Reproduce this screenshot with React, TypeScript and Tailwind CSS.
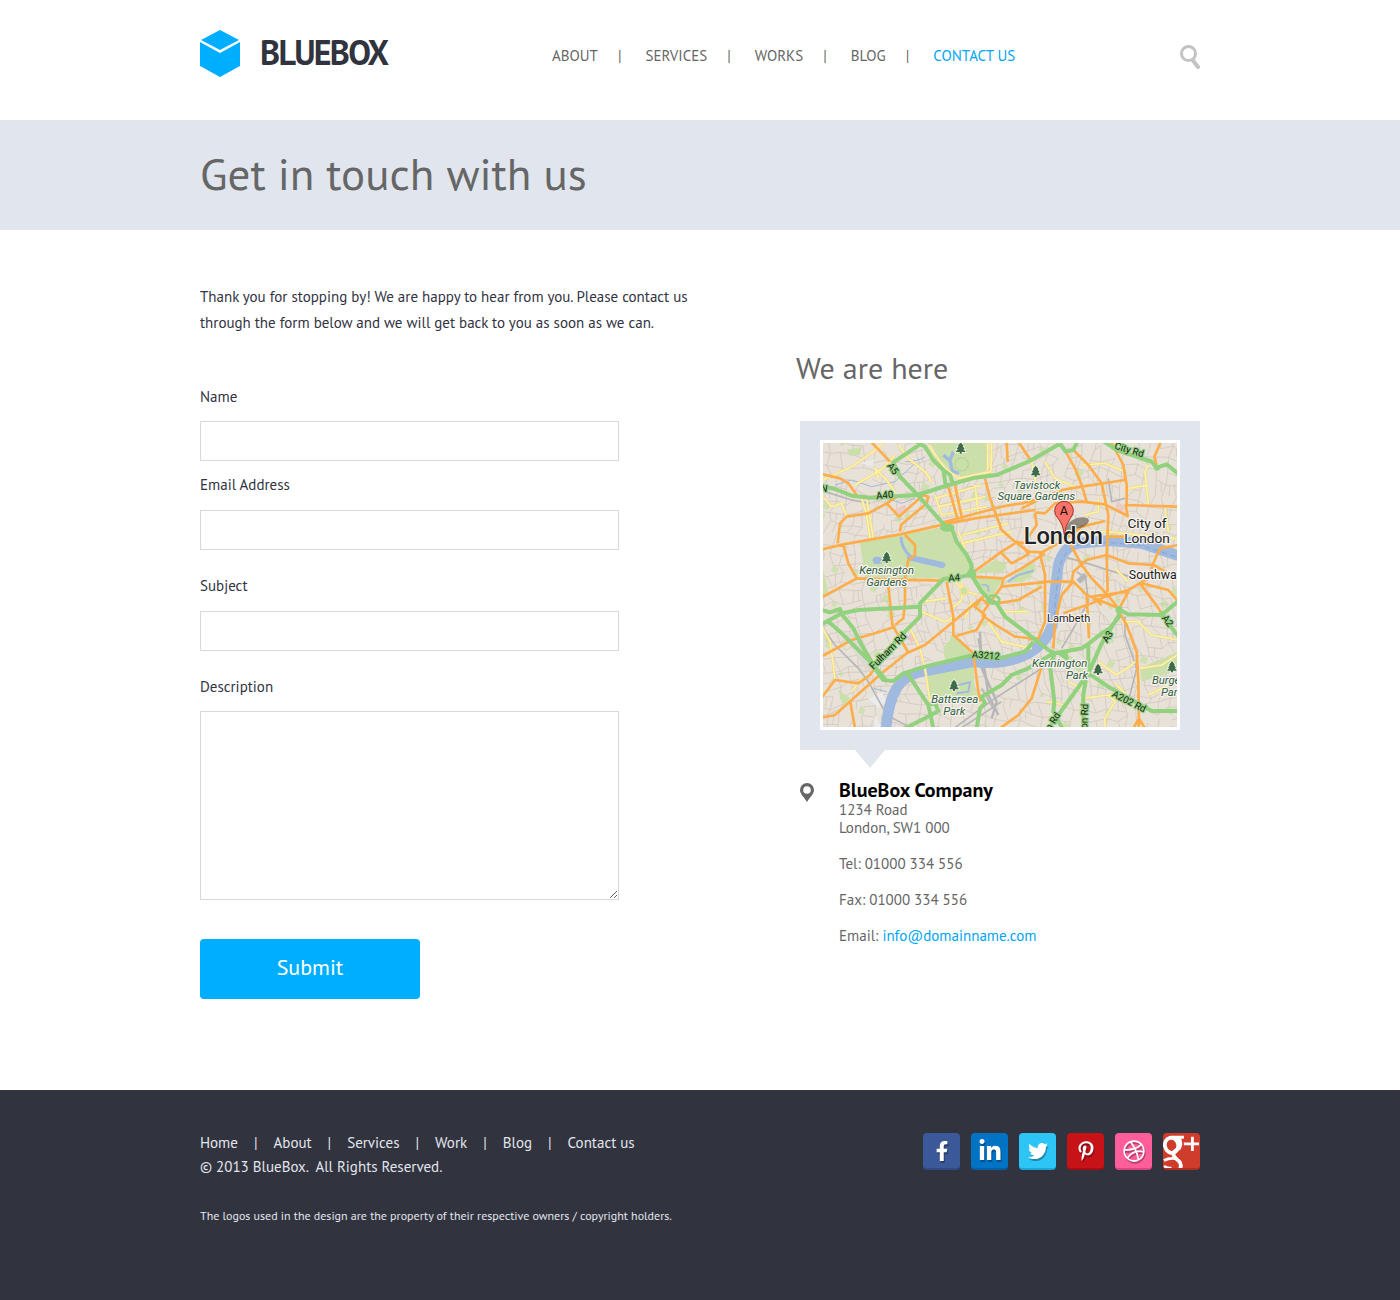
import { Fragment } from "react";
import type { ReactNode } from "react";
import { FaFacebookF, FaLinkedinIn, FaTwitter, FaPinterestP, FaDribbble } from "react-icons/fa";

const navItems = ["ABOUT", "SERVICES", "WORKS", "BLOG", "CONTACT US"];
const footerItems = ["Home", "About", "Services", "Work", "Blog", "Contact us"];

/* ---------- map data (three units per map pixel) ---------- */

const greenRoads = [
  "M315 28L235 82L255 125L308 180L395 278L412 285L425 320L455 360L470 390L468 418L500 470L525 495L545 505L570 545L630 590L700 645L720 655L800 640L822 625L860 595L885 580L912 545L912 524L940 538L1040 540L1090 498",
  "M20 153L60 162L110 182L165 188L308 180L400 150L480 128L545 120L640 80L735 26",
  "M300 18L330 35L355 75L385 105L405 120L415 150M385 105L392 150",
  "M468 418L440 425L385 432L315 505L315 545L240 620L185 690",
  "M20 568L80 535L130 525L310 515",
  "M20 525L45 532L75 522L82 540L115 580L140 630L175 690L215 738",
  "M35 555L75 590L165 680L205 735L235 738L265 715L330 695L475 660L560 668L630 650L655 620",
  "M275 712L340 810L355 880M340 810L360 805L370 828L330 850L270 880",
  "M485 880L495 820L510 805L500 785L560 750L590 720L640 700L715 655",
  "M1040 540L1090 604M912 540L860 625L820 715L730 840L700 880",
  "M720 655L705 690L718 800L715 830L742 880",
  "M820 625L820 700M815 720L805 780L805 880",
  "M820 715L880 755L960 800L1010 828L1090 828",
  "M868 20L905 45L1010 80L1025 98L1055 88L1090 117",
  "M735 26L752 50L775 45L787 20M735 655L755 670L750 645",
];

const orangeRoads = [
  "M168 20L225 80M20 117L75 130L100 145L125 180",
  "M20 343L85 328L255 298L400 265L480 250L660 225",
  "M68 325L75 265L95 245L160 235L215 205L245 185",
  "M215 205L252 245L325 180L340 185L335 205L258 270L255 290",
  "M400 155L430 260M420 150L442 255",
  "M510 130L525 190L560 285L600 320L630 325",
  "M385 262L560 215L620 205L680 190",
  "M85 330L100 385L125 430L80 455L20 487M125 430L385 437",
  "M270 300L300 330L300 360L280 375L270 430L270 500L265 550L240 570",
  "M218 430L232 570L279 651M20 664L110 615L180 595L240 575",
  "M395 440L415 545L415 600L475 655L490 770L497 800",
  "M510 480L415 560L330 630L275 655L200 715L110 795L60 840L20 848M105 795L120 880",
  "M20 788L60 735L130 745L165 720L185 690",
  "M425 602L485 585L510 540L480 515L500 490L520 510L505 530",
  "M500 540L550 575L600 605L670 612",
  "M470 415L560 350L600 325M470 425L565 430L620 400L690 355",
  "M530 495L560 455L700 440L770 440M545 505L610 495L680 455M560 455L565 430",
  "M575 20L578 80M610 20L650 80",
  "M555 350L590 385L640 358L625 335",
  "M600 320L640 350L680 352L740 320L800 275L870 258",
  "M660 235L665 270L630 320M660 232L690 235L720 205L800 200L870 208L938 243L932 210L1090 215",
  "M620 220L680 190L740 165L800 155L930 135L930 110",
  "M740 28L780 100L800 150L815 200",
  "M775 45L820 90L860 145L880 240L875 360L878 470",
  "M890 24L925 90L935 150L935 210M1038 20L1018 65L1025 95",
  "M675 355L690 420L690 560L670 610L640 613",
  "M765 325L800 390L830 430L878 480",
  "M770 440L775 410L815 375L875 360L940 385L1015 390L1090 432",
  "M740 480L775 440L815 480L912 520M880 305L930 305M715 640L720 560L740 480",
  "M745 535L830 505L870 485L940 465L1000 430L1015 385L1035 340L1090 330",
  "M815 480L822 610M870 470L912 522L940 470L878 478L830 485L860 510",
  "M975 445L1020 505L1040 535M980 445L1060 465L1090 500",
  "M912 530L935 570L965 650L970 740L972 880",
  "M680 695L650 790L610 840L555 880M955 880L972 850L990 880",
];

const yellowRoads = [
  "M20 137L110 95L175 50L207 20M120 150L205 100L240 60",
  "M190 130L180 100L210 130L240 170M250 30L280 70L330 110L350 140",
  "M20 182L50 215L80 205L95 245M140 190L155 240L165 310M155 190L175 310",
  "M530 20L528 110L430 130L390 100L340 30M518 20L518 105",
  "M360 190L500 150M370 215L510 185M380 240L515 215M440 300L580 265M440 325L590 290",
  "M430 290L450 340M480 150L490 240M360 180L380 240",
  "M320 530L390 560L415 545M280 570L315 640L330 700L345 800",
  "M320 500L395 490M410 520L440 495L440 440M420 440L447 468L490 480M470 500L450 550",
  "M520 560L560 620L650 640M560 530L640 530",
  "M800 90L870 85L930 110M690 80L720 130L790 160M650 80L670 180M810 240L850 230L850 190",
  "M800 290L880 290L1090 312M1000 90L990 110L1000 210M1050 220L1060 290M900 400L940 440",
  "M770 540L820 570M920 560L970 560L1010 600L1090 615M850 680L905 720L950 690L960 680",
  "M975 700L1040 690L1090 658M760 740L800 760M800 790L880 780L930 775L900 745",
  "M880 780L900 800L870 850L870 880M695 800L750 810M1000 780L1060 750",
  "M20 575L45 620L55 690L60 735M140 730L110 770M940 160L1000 150M720 150L740 190",
];

const parks = [
  "M135 325L255 300L395 275L425 320L470 390L460 420L400 430L150 425Z",
  "M345 20H518V105L440 125L400 100L370 70Z",
  "M335 715L475 690L480 780L400 795L345 790Z",
  "M385 640L415 600L470 655L390 675Z",
  "M480 415L540 375L575 385L565 412Z",
  "M478 428L565 432L530 485L505 470Z",
  "M568 445L650 380L665 405L625 440Z",
  "M975 700L1090 650V705L980 740Z",
  "M760 660L815 690L808 720L760 690Z",
  "M24 400L40 470L24 480Z",
  "M95 45L140 35L135 60L105 62Z",
  "M70 765L105 790L85 815Z",
];

const pseudoRandom = (n: number) => {
  const v = Math.sin(n * 127.1 + 11.7) * 43758.5453;
  return v - Math.floor(v);
};

/* side streets: a jittered grid whose direction drifts across the map */
const streetPoint = (i: number, j: number) => {
  const x = i * 33 - 20;
  const y = j * 31 - 20;
  return [
    Math.round(x + Math.cos(y / 130) * 34 + (pseudoRandom(i * 53 + j) - 0.5) * 20),
    Math.round(y + Math.sin(x / 170 + y / 260) * 40 + (pseudoRandom(i + j * 71) - 0.5) * 20),
  ];
};

const streets: string[] = [];
const greens: { x: number; y: number; s: number }[] = [];
for (let i = 0; i < 36; i++) {
  for (let j = 0; j < 32; j++) {
    const [ax, ay] = streetPoint(i, j);
    const [bx, by] = streetPoint(i + 1, j);
    const [cx, cy] = streetPoint(i, j + 1);
    const r = pseudoRandom(i * 91 + j * 17);
    if (r > 0.25) streets.push(`M${ax} ${ay}L${bx} ${by}`);
    if (r < 0.75) streets.push(`M${ax} ${ay}L${cx} ${cy}`);
    if (r > 0.35 && r < 0.5) {
      streets.push(`M${(ax + bx) / 2} ${(ay + by) / 2}L${(ax + cx) / 2 + 16} ${(ay + cy) / 2 + 14}`);
    }
    if (r > 0.92) greens.push({ x: ax, y: ay, s: Math.round(10 + pseudoRandom(i + j) * 12) });
  }
}
const streetPath = streets.join("");

function Roads({ paths, color, width }: { paths: string[]; color: string; width: number }) {
  return <path d={paths.join("")} fill="none" stroke={color} strokeWidth={width} strokeLinejoin="round" />;
}

function Tree({ x, y }: { x: number; y: number }) {
  return (
    <path
      transform={`translate(${x} ${y})`}
      d="M0 -16L9 -5H6L12 4H8L15 13H3V18H-3V13H-15L-8 4H-12L-6 -5H-9Z"
      fill="#3f6b4b"
      stroke="#f4f5e8"
      strokeWidth="4"
      paintOrder="stroke"
    />
  );
}

type LabelProps = {
  x: number;
  y: number;
  size?: number;
  rotate?: number;
  fill?: string;
  halo?: string;
  italic?: boolean;
  weight?: number;
  children: ReactNode;
};

function MapLabel({ x, y, size = 33, rotate = 0, fill = "#222222", halo = "#f7f4ef", italic, weight = 400, children }: LabelProps) {
  return (
    <text
      x={x}
      y={y}
      fontSize={size}
      fontWeight={weight}
      fontStyle={italic ? "italic" : "normal"}
      fill={fill}
      stroke={halo}
      strokeWidth="7"
      strokeLinejoin="round"
      paintOrder="stroke"
      textAnchor="middle"
      transform={`rotate(${rotate} ${x} ${y})`}
    >
      {children}
    </text>
  );
}

function LondonMap() {
  const road = "#92d17e";
  const park = "#2f5e3f";
  return (
    <svg
      viewBox="24 24 1062 852"
      role="img"
      aria-label="Map of London"
      className="block w-full font-['Roboto',sans-serif]"
    >
      <rect x="24" y="24" width="1062" height="852" fill="#e8e1d7" />
      <g fill="#cfe0b2">
        {greens.map((g, i) => (
          <rect key={i} x={g.x} y={g.y} width={g.s} height={g.s} transform={`rotate(25 ${g.x} ${g.y})`} />
        ))}
      </g>
      <path d={streetPath} fill="none" stroke="#cdc2ba" strokeWidth="2" />
      <path d="M235 225l35-16 8 14-30 16zM905 200l24 12-6 22-20-8zM285 595l22 14-14 14-16-10z" fill="#ecc9c4" />
      <path d="M160 790l40-20 16 30-26 20zM180 840l20 36h-24zM135 85l45-12-10 20z" fill="#ebebeb" />
      <path d="M85 598L120 595L170 665L185 715L150 700Z" fill="#dcd8d4" />
      <g fill="#cadfaa">
        {parks.map((d) => (
          <path key={d} d={d} />
        ))}
      </g>
      <circle cx="440" cy="88" r="20" fill="none" stroke="#b4d090" strokeWidth="3" />
      <g fill="none" stroke="#b6b6b9" strokeWidth="5">
        <path d="M24 580L60 630L130 700L160 740L215 840L300 885" />
        <path d="M495 590L500 700L545 800L530 850M490 610L512 720L520 780L550 840" strokeWidth="7" />
        <path d="M410 885L540 790L680 700M430 885L560 800M500 760L540 830" />
        <path d="M740 640L770 590L820 500L812 430L785 410M930 545L930 600L965 700L940 800" />
        <path d="M880 130L890 200L930 190M745 365L800 380L880 405L960 430M30 170L110 195L165 205" />
        <path d="M790 440L812 420" strokeWidth="16" />
      </g>
      <g fill="none" stroke="#a0badf">
        <path
          d="M212 890Q220 800 245 760Q265 725 310 712L475 680Q560 690 620 665Q690 635 712 570L720 470L730 390Q745 335 790 325L880 317L980 325L1090 362"
          strokeWidth="32"
        />
        <path d="M258 305Q258 340 290 368" strokeWidth="9" />
        <path d="M285 368Q330 378 382 390" strokeWidth="18" strokeLinecap="round" />
        <path d="M184 376L190 376" strokeWidth="22" strokeLinecap="round" />
        <path d="M385 60L405 78L412 108L432 115M403 80L415 50" strokeWidth="10" />
        <path d="M578 440L610 420L655 407M430 750L465 742L460 770L425 775" strokeWidth="6" />
        <path d="M500 450Q525 445 520 470" strokeWidth="5" />
        <path d="M60 150L110 135L170 155L240 140L300 85M270 80Q310 80 330 65M215 190L260 205L300 190M175 760L215 770" strokeWidth="3" />
      </g>
      <path
        d="M716 570L724 470L734 395Q750 342 790 330L880 322L980 332L1090 368"
        fill="none"
        stroke="#86a3d6"
        strokeWidth="3"
        strokeDasharray="16 10"
      />
      <Roads paths={yellowRoads} color="#e6d592" width={8} />
      <Roads paths={yellowRoads} color="#fff3a0" width={5} />
      <Roads paths={orangeRoads} color="#fdae4b" width={8} />
      <Roads paths={greenRoads} color={road} width={12} />
      <circle cx="447" cy="468" r="12" fill="#cadfaa" stroke="#f2e48c" strokeWidth="5" />
      <ellipse cx="535" cy="494" rx="18" ry="12" fill="none" stroke={road} strokeWidth="8" />
      <g fill={road}>
        <ellipse cx="397" cy="278" rx="22" ry="12" />
        <circle cx="470" cy="416" r="14" />
        <circle cx="912" cy="524" r="11" />
        <circle cx="1026" cy="98" r="9" />
        <circle cx="1042" cy="538" r="10" />
      </g>

      <Tree x={437} y={38} />
      <Tree x={662} y={108} />
      <Tree x={215} y={366} />
      <Tree x={417} y={750} />
      <Tree x={849} y={702} />
      <Tree x={1071} y={694} />

      <g>
        <MapLabel x={226} y={107} size={29} rotate={52} halo={road}>A5</MapLabel>
        <MapLabel x={210} y={190} size={29} rotate={-6} halo={road}>A40</MapLabel>
        <MapLabel x={26} y={170} size={29} rotate={8} halo={road}>N</MapLabel>
        <MapLabel x={418} y={438} size={29} rotate={-4} halo={road}>A4</MapLabel>
        <MapLabel x={226} y={655} size={30} rotate={-45} halo={road}>Fulham Rd</MapLabel>
        <MapLabel x={512} y={671} size={29} rotate={4} halo={road}>A3212</MapLabel>
        <MapLabel x={886} y={610} size={29} rotate={-58} halo={road}>A3</MapLabel>
        <MapLabel x={1050} y={564} size={29} rotate={52} halo={road}>A2</MapLabel>
        <MapLabel x={938} y={808} size={29} rotate={27} halo={road}>A202 Rd</MapLabel>
        <MapLabel x={940} y={54} size={29} rotate={17} halo={road}>City Rd</MapLabel>
        <MapLabel x={818} y={844} size={29} rotate={-88} halo={road}>on Rd</MapLabel>
        <MapLabel x={722} y={864} size={29} rotate={-58} halo={road}>n Rd</MapLabel>
      </g>
      <g>
        <MapLabel x={666} y={161} size={34} italic fill={park}>Tavistock</MapLabel>
        <MapLabel x={664} y={196} size={34} italic fill={park}>Square Gardens</MapLabel>
        <MapLabel x={215} y={416} size={34} italic fill={park}>Kensington</MapLabel>
        <MapLabel x={215} y={454} size={34} italic fill={park}>Gardens</MapLabel>
        <MapLabel x={419} y={803} size={34} italic fill={park}>Battersea</MapLabel>
        <MapLabel x={418} y={839} size={34} italic fill={park}>Park</MapLabel>
        <MapLabel x={734} y={695} size={34} italic fill={park}>Kennington</MapLabel>
        <MapLabel x={786} y={731} size={34} italic fill={park}>Park</MapLabel>
        <MapLabel x={1062} y={747} size={34} italic fill={park}>Burges</MapLabel>
        <MapLabel x={1071} y={782} size={34} italic fill={park}>Park</MapLabel>
        <MapLabel x={761} y={560}>Lambeth</MapLabel>
        <MapLabel x={1029} y={432} size={37}>Southwark</MapLabel>
        <MapLabel x={996} y={278} size={41}>City of</MapLabel>
        <MapLabel x={996} y={323} size={41}>London</MapLabel>
      </g>

      <path d="M750 292Q752 262 785 249Q820 242 822 258Q814 280 775 282Z" fill="#3b352c" opacity="0.5" />
      <MapLabel x={745} y={326} size={71} weight={500}>London</MapLabel>
      <path
        d="M748 300Q745 270 729 250Q719 240 719 227A28 28 0 0 1 775 227Q775 240 766 250Q751 270 748 300Z"
        fill="#fb7268"
        stroke="#a0302a"
        strokeWidth="3"
      />
      <text x="747" y="240" fontSize="38" textAnchor="middle" fill="#111111">
        A
      </text>
    </svg>
  );
}

/* ---------- icons ---------- */

function Logo() {
  return (
    <svg viewBox="0 0 40 47" className="h-[47px] w-10" fill="#00aeff" aria-hidden="true">
      <path d="M20 0L39 10L20 20L1 10Z" />
      <path d="M0 12L20 23L40 12V36L20 47L0 36Z" />
    </svg>
  );
}

function SearchIcon() {
  return (
    <svg viewBox="0 0 20 24" className="h-6 w-5" fill="none" stroke="#c3c3c3" aria-hidden="true">
      <circle cx="8.500" cy="8.500" r="7" strokeWidth="3" />
      <path d="M13 15.500L18 22" strokeWidth="4" strokeLinecap="round" />
    </svg>
  );
}

function PinIcon() {
  return (
    <svg viewBox="0 0 14 19" className="h-[19px] w-3.5" aria-hidden="true">
      <path
        fillRule="evenodd"
        fill="#666666"
        d="M7 0A7 7 0 0 1 14 7C14 11 10 14 7 19C4 14 0 11 0 7A7 7 0 0 1 7 0ZM7 3.200A3.800 3.800 0 1 0 7 10.800A3.800 3.800 0 1 0 7 3.200Z"
      />
    </svg>
  );
}

function GooglePlusMark() {
  return (
    <svg viewBox="0 0 37 37" className="size-full" fill="none" stroke="#ffffff" aria-hidden="true">
      <ellipse cx="8" cy="13" rx="7" ry="8" strokeWidth="4" transform="rotate(-14 8 13)" />
      <path d="M8 4.500H21" strokeWidth="3" />
      <path d="M15 5Q19 10 16 16Q9 20 10 23Q11 26 16 30Q19 33 17 38" strokeWidth="4" />
      <path d="M0 29Q5 26 13 27" strokeWidth="3" />
      <path d="M0 35Q3 38 8 37" strokeWidth="3" />
      <path d="M21 11.500H37M30 4V19" strokeWidth="3" />
    </svg>
  );
}

const shadow = "drop-shadow-[1px_2px_0px_rgba(0,0,0,0.3)]";

const socials: { name: string; tile: string; icon: ReactNode }[] = [
  { name: "Facebook", tile: "bg-[#3b5999] border-[#2f4a86]", icon: <FaFacebookF className={`size-5 ${shadow}`} /> },
  { name: "LinkedIn", tile: "bg-[#0173c5] border-[#015fa8]", icon: <FaLinkedinIn className={`size-6 ${shadow}`} /> },
  { name: "Twitter", tile: "bg-[#2cc5f6] border-[#1ba6d8]", icon: <FaTwitter className={`size-5 ${shadow}`} /> },
  { name: "Pinterest", tile: "bg-[#c71218] border-[#a50d12]", icon: <FaPinterestP className={`size-5 ${shadow}`} /> },
  { name: "Dribbble", tile: "bg-[#ff5e9a] border-[#dd4580]", icon: <FaDribbble className={`size-[22px] ${shadow}`} /> },
  { name: "Google Plus", tile: "bg-[#d03c2c] border-[#ae2f22]", icon: <GooglePlusMark /> },
];

/* ---------- page ---------- */

const field = "block w-full max-w-[419px] border border-[#d9d9d9] bg-white px-3 outline-none focus:border-[#00aeff]";

export default function App() {
  return (
    <div className="bg-white font-['PT_Sans','Lato',sans-serif] text-[15px] text-[#31333f]">
      <header className="mx-auto flex h-[120px] max-w-[1000px] items-start justify-between">
        <a href="#home" className="mt-[30px] flex items-start gap-5">
          <Logo />
          <span className="text-[34px] leading-[44px] font-bold tracking-tighter">BLUEBOX</span>
        </a>
        <nav className="mt-11 flex items-center gap-5 leading-6 text-[#666666]" aria-label="Main">
          {navItems.map((item, i) => (
            <Fragment key={item}>
              {i > 0 && <span>|</span>}
              <a href="#page" className={i === 0 ? "" : i === 4 ? "ml-1 text-[#00a5f5]" : "ml-1"}>
                {item}
              </a>
            </Fragment>
          ))}
        </nav>
        <button type="button" aria-label="Search" className="mt-[45px]">
          <SearchIcon />
        </button>
      </header>

      <div className="bg-[#e1e6ee]">
        <div className="mx-auto flex h-[110px] max-w-[1000px] items-center pb-1">
          <h1 className="text-[45px] leading-[48px] text-[#666666]">Get in touch with us</h1>
        </div>
      </div>

      <main className="mx-auto flex max-w-[1000px] items-start justify-between pt-[54px] pb-[91px]">
        <section className="w-1/2">
          <p className="leading-[26px]">
            Thank you for stopping by! We are happy to hear from you. Please contact us through the form below and we
            will get back to you as soon as we can.
          </p>
          <form className="mt-[49px]" onSubmit={(e) => e.preventDefault()}>
            <label htmlFor="name" className="block leading-6">Name</label>
            <input id="name" type="text" className={`mt-3 h-10 ${field}`} />
            <label htmlFor="email" className="mt-3 block leading-6">Email Address</label>
            <input id="email" type="email" className={`mt-[13px] h-10 ${field}`} />
            <label htmlFor="subject" className="mt-6 block leading-6">Subject</label>
            <input id="subject" type="text" className={`mt-[13px] h-10 ${field}`} />
            <label htmlFor="description" className="mt-6 block leading-6">Description</label>
            <textarea id="description" className={`mt-3 h-[189px] py-2 ${field}`} />
            <button
              type="submit"
              className="mt-[39px] block h-[60px] w-[220px] rounded bg-[#00aeff] pb-1 text-[22px] text-white"
            >
              Submit
            </button>
          </form>
        </section>

        <section className="w-2/5 pt-[66px]">
          <h2 className="-ml-1 text-3xl leading-9 text-[#666666]">We are here</h2>
          <div className="mt-[35px] bg-[#e1e6ee] px-5 pt-[19px] pb-5">
            <div className="border-[3px] border-white">
              <LondonMap />
            </div>
          </div>
          <svg viewBox="0 0 30 18" className="ml-[55px] block h-[18px] w-[30px]" aria-hidden="true">
            <path d="M0 0H30L15 18Z" fill="#e1e6ee" />
          </svg>
          <div className="mt-[11px] flex items-start gap-[25px]">
            <div className="mt-1">
              <PinIcon />
            </div>
            <address className="leading-[18px] text-[#666666] not-italic">
              <h3 className="text-xl leading-[22px] font-bold text-black">BlueBox Company</h3>
              <p>1234 Road</p>
              <p>London, SW1 000</p>
              <p className="mt-[18px]">Tel: 01000 334 556</p>
              <p className="mt-[18px]">Fax: 01000 334 556</p>
              <p className="mt-[18px]">
                Email:{" "}
                <a href="mailto:info@domainname.com" className="text-[#00a5f5]">
                  info@domainname.com
                </a>
              </p>
            </address>
          </div>
        </section>
      </main>

      <footer className="bg-[#31333f] text-[#e3e6ec]">
        <div className="mx-auto flex min-h-[210px] max-w-[1000px] items-start justify-between">
          <div className="pt-[41px] leading-6">
            <nav className="flex gap-4" aria-label="Footer">
              {footerItems.map((item, i) => (
                <Fragment key={item}>
                  {i > 0 && <span>|</span>}
                  <a href="#page">{item}</a>
                </Fragment>
              ))}
            </nav>
            <p>© 2013 BlueBox.&nbsp; All Rights Reserved.</p>
            <p className="mt-[25px] text-xs leading-6">
              The logos used in the design are the property of their respective owners / copyright holders.
            </p>
          </div>
          <ul className="mt-[43px] flex gap-[11px]">
            {socials.map((s) => (
              <li key={s.name}>
                <a
                  href="#social"
                  aria-label={s.name}
                  className={`flex size-[37px] items-center justify-center overflow-hidden rounded-sm border-b-2 text-white ${s.tile}`}
                >
                  {s.icon}
                </a>
              </li>
            ))}
          </ul>
        </div>
      </footer>
    </div>
  );
}
